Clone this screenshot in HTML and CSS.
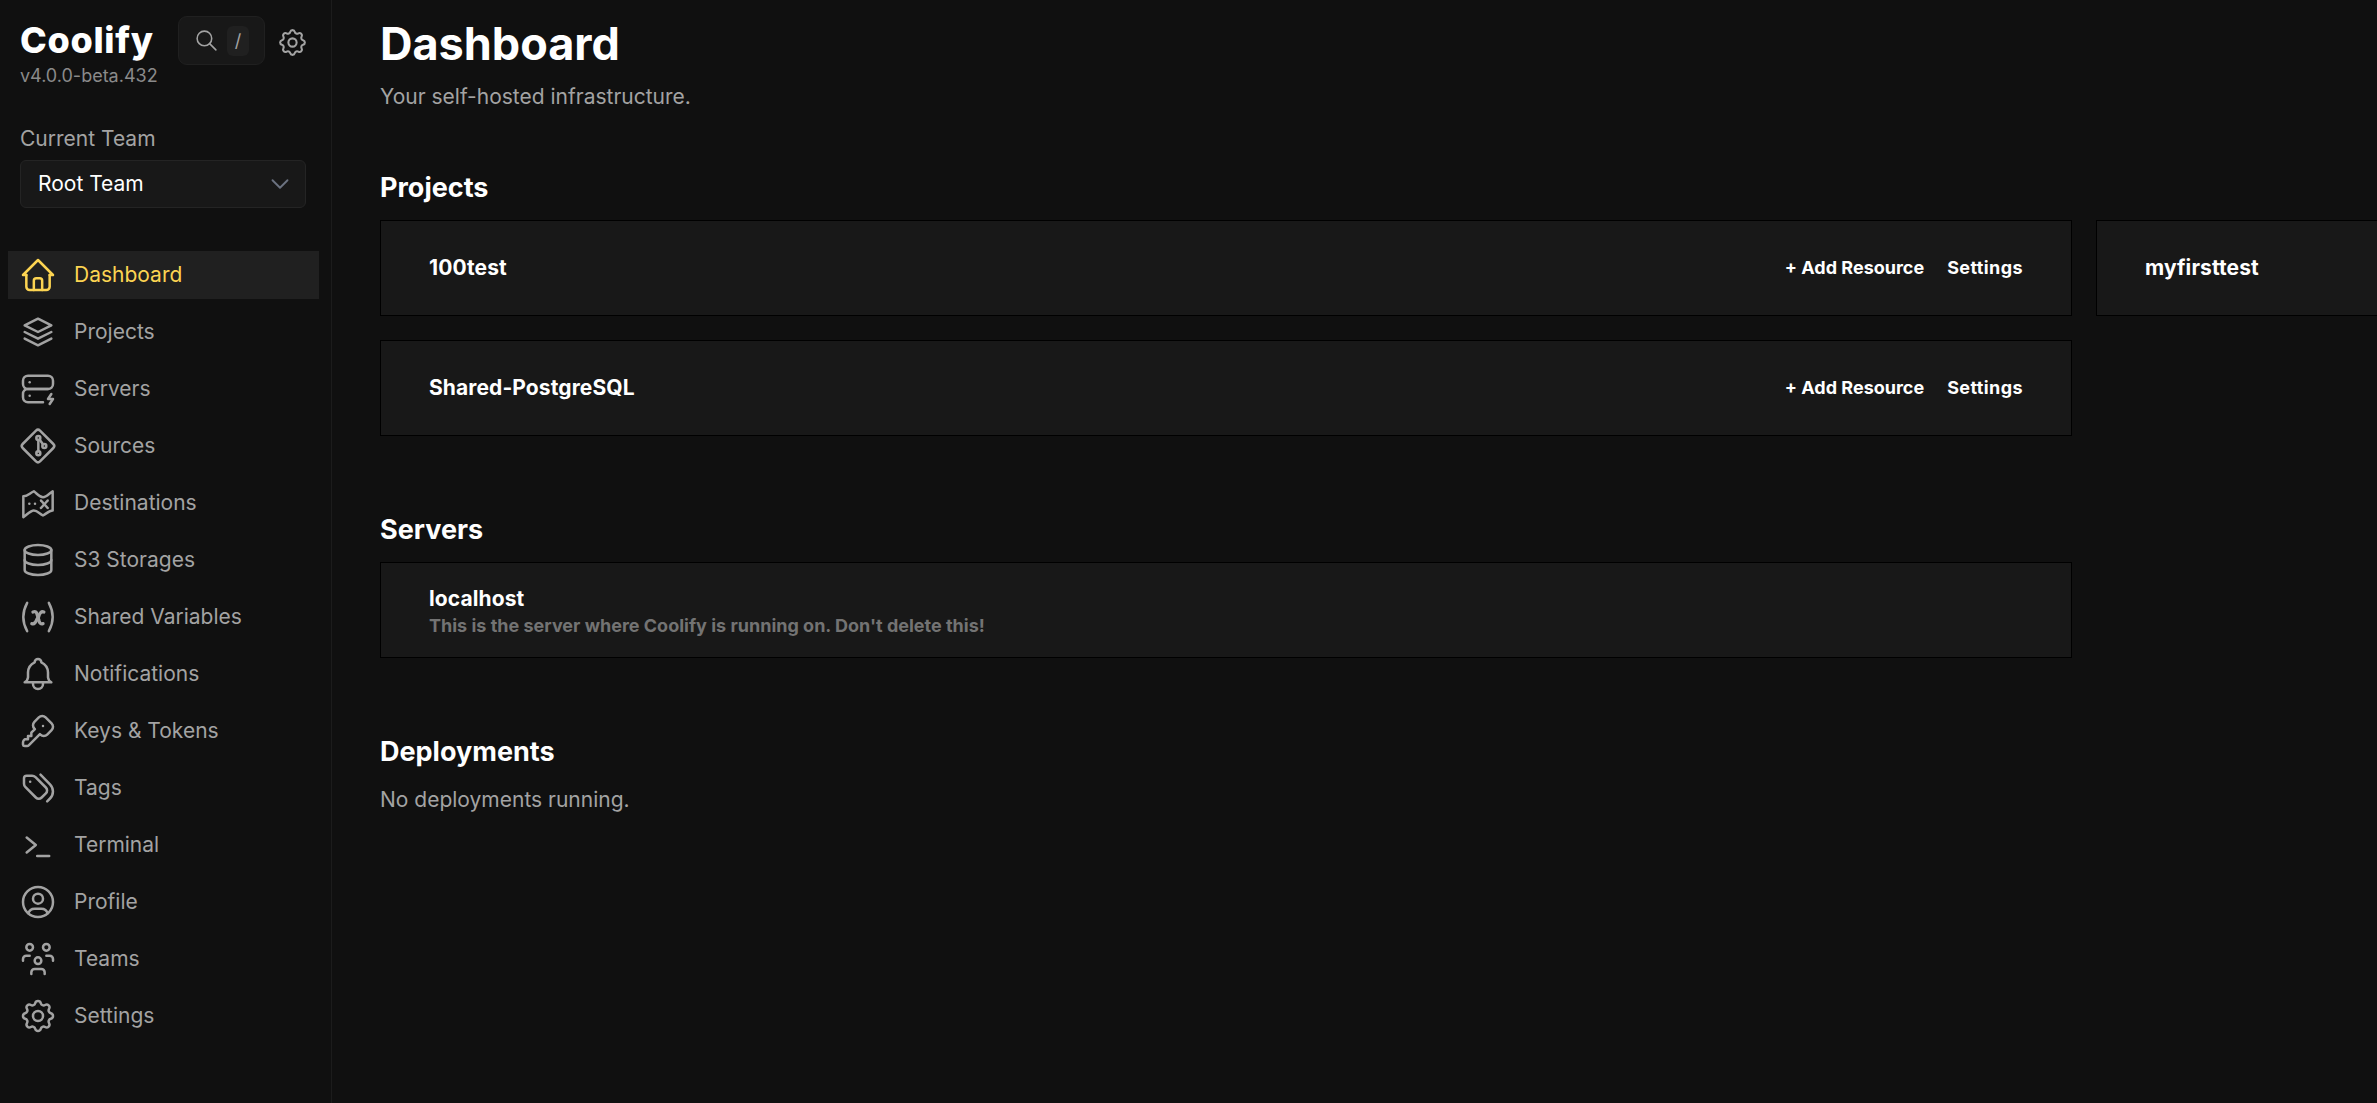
FILE: index.html
```html
<!DOCTYPE html>
<html lang="en">
<head>
	<meta charset="UTF-8">
	<title>Dashboard | Coolify</title>
	<link rel="stylesheet" href="styles.css">
</head>
<body>
	<aside class="sidebar">
		<div class="brand">
			<div class="brand-name">
				<div class="logo">Coolify</div>
				<div class="version">v4.0.0-beta.432</div>
			</div>
			<div class="search">
				<svg class="search-icon" viewBox="0 0 24 24"><path d="M3 10a7 7 0 1 0 14 0a7 7 0 1 0-14 0"/><path d="M21 21l-6-6"/></svg>
				<span class="kbd">/</span>
			</div>
			<svg class="gear" viewBox="0 0 24 24"><path d="M10.325 4.317c.426-1.756 2.924-1.756 3.35 0a1.724 1.724 0 0 0 2.573 1.066c1.543-.94 3.31.826 2.37 2.37a1.724 1.724 0 0 0 1.065 2.572c1.756.426 1.756 2.924 0 3.35a1.724 1.724 0 0 0-1.066 2.573c.94 1.543-.826 3.31-2.37 2.37a1.724 1.724 0 0 0-2.572 1.065c-.426 1.756-2.924 1.756-3.35 0a1.724 1.724 0 0 0-2.573-1.066c-1.543.94-3.31-.826-2.37-2.37a1.724 1.724 0 0 0-1.065-2.572c-1.756-.426-1.756-2.924 0-3.35a1.724 1.724 0 0 0 1.066-2.573c-.94-1.543.826-3.31 2.37-2.37c1 .608 2.296.07 2.572-1.065"/><path d="M9 12a3 3 0 1 0 6 0a3 3 0 0 0-6 0"/></svg>
		</div>

		<div class="team">
			<div class="team-label">Current Team</div>
			<div class="team-select">
				<span>Root Team</span>
				<svg class="chevron" viewBox="0 0 24 24"><path d="M6 9l6 6l6-6"/></svg>
			</div>
		</div>

		<ul class="nav">
			<li class="active">
				<svg viewBox="0 0 24 24"><path d="M5 12H3l9-9l9 9h-2"/><path d="M5 12v7a2 2 0 0 0 2 2h10a2 2 0 0 0 2-2v-7"/><path d="M9.500 21v-5.500a1.500 1.500 0 0 1 1.500-1.500h2a1.500 1.500 0 0 1 1.500 1.500v5.500"/></svg>
				Dashboard
			</li>
			<li>
				<svg viewBox="0 0 24 24"><path d="M12 4L4 8l8 4l8-4z"/><path d="M4 12l8 4l8-4"/><path d="M4 16l8 4l8-4"/></svg>
				Projects
			</li>
			<li>
				<svg viewBox="0 0 24 24"><path d="M3 7a3 3 0 0 1 3-3h12a3 3 0 0 1 3 3v2a3 3 0 0 1-3 3H6a3 3 0 0 1-3-3z"/><path d="M15 20H6a3 3 0 0 1-3-3v-2a3 3 0 0 1 3-3h12"/><path d="M7 8v.01"/><path d="M7 16v.01"/><path d="M20 15l-2 3h3l-2 3"/></svg>
				Servers
			</li>
			<li>
				<svg viewBox="0 0 24 24"><path d="M10.800 2.800l-8 8a1.700 1.700 0 0 0 0 2.400l8 8a1.700 1.700 0 0 0 2.400 0l8-8a1.700 1.700 0 0 0 0-2.400l-8-8a1.700 1.700 0 0 0-2.400 0"/><circle cx="12.200" cy="7.200" r="1.200"/><circle cx="12.200" cy="16.400" r="1.200"/><circle cx="15.800" cy="12" r="1.200"/><path d="M12.200 8.400v6.800"/><path d="M13 8.200l2 2.800"/></svg>
				Sources
			</li>
			<li>
				<svg viewBox="0 0 24 24"><path d="M3.200 8C6 8 7 6 9.500 5C11.500 6.500 13 8.500 15 8.500C17 8.500 19 6 20.800 5V16.500C18.500 16.500 17 18.500 15 19.500C13 18.500 11.500 16.500 9.500 16.500C7.500 16.500 5.500 19 3.200 20.500Z"/><path d="M6.800 12.400v.01"/><path d="M10.200 12.400v.01"/><path d="M13.800 10.500l4 4.500"/><path d="M17.800 10.500l-4 4.500"/></svg>
				Destinations
			</li>
			<li>
				<svg viewBox="0 0 24 24"><path d="M4 6c0 1.657 3.582 3 8 3s8-1.343 8-3s-3.582-3-8-3s-8 1.343-8 3"/><path d="M4 6v6c0 1.657 3.582 3 8 3s8-1.343 8-3V6"/><path d="M4 12v6c0 1.657 3.582 3 8 3s8-1.343 8-3v-6"/></svg>
				S3 Storages
			</li>
			<li>
				<svg viewBox="0 0 24 24"><path d="M5.500 3.500C2.500 9 2.500 15 5.500 20.500"/><path d="M18.500 3.500c3 5.500 3 11.500 0 17"/><path d="M9 9c1.500-.500 2-.200 2.500 1.500l1.200 4c.5 1.500 1 1.800 2.300 1.500" stroke-width="2"/><path d="M15.500 9c-1.500-.500-2.500.500-3.200 3l-1 1.500c-.7 2-1.500 3-3 2.500" stroke-width="2"/></svg>
				Shared Variables
			</li>
			<li>
				<svg viewBox="0 0 24 24"><path d="M10 5a2 2 0 1 1 4 0a7 7 0 0 1 4 6v3a4 4 0 0 0 2 3H4a4 4 0 0 0 2-3v-3a7 7 0 0 1 4-6"/><path d="M9 17v1a3 3 0 0 0 6 0v-1"/></svg>
				Notifications
			</li>
			<li>
				<svg viewBox="0 0 24 24"><path d="M16.555 3.843l3.602 3.602a2.877 2.877 0 0 1 0 4.069l-2.643 2.643a2.877 2.877 0 0 1-4.069 0l-.301-.301l-6.558 6.558a2 2 0 0 1-1.239.578L5.172 21H4a1 1 0 0 1-.993-.883L3 20v-1.172a2 2 0 0 1 .467-1.284l.119-.13L4 17h2v-2h2v-2l2.144-2.144l-.301-.301a2.877 2.877 0 0 1 0-4.069l2.643-2.643a2.877 2.877 0 0 1 4.069 0"/><path d="M15 9h.01"/></svg>
				Keys &amp; Tokens
			</li>
			<li>
				<svg viewBox="0 0 24 24"><path d="M3.600 6.200v3.200c0 .8.300 1.500.900 2.100l6.200 6.200c1 1 2.500 1 3.500 0l2.500-2.500c1-1 1-2.500 0-3.500L10.500 5.500c-.6-.6-1.300-.9-2.100-.9H5.200a1.600 1.600 0 0 0-1.600 1.600"/><path d="M17.500 20l1.700-1.700a6 6 0 0 0 0-8.500L13.500 4"/><path d="M7.300 8.300h.01"/></svg>
				Tags
			</li>
			<li>
				<svg viewBox="0 0 24 24"><path d="M5.200 7.500l5.500 4.500l-5.500 4.500"/><path d="M11.500 18.600h7.200"/></svg>
				Terminal
			</li>
			<li>
				<svg viewBox="0 0 24 24"><path d="M3 12a9 9 0 1 0 18 0a9 9 0 1 0-18 0"/><path d="M9 10a3 3 0 1 0 6 0a3 3 0 1 0-6 0"/><path d="M6.168 18.849A4 4 0 0 1 10 16h4a4 4 0 0 1 3.834 2.855"/></svg>
				Profile
			</li>
			<li>
				<svg viewBox="0 0 24 24"><path d="M10 13a2 2 0 1 0 4 0a2 2 0 0 0-4 0"/><path d="M8 21v-1a2 2 0 0 1 2-2h4a2 2 0 0 1 2 2v1"/><path d="M15 5a2 2 0 1 0 4 0a2 2 0 0 0-4 0"/><path d="M17 10h2a2 2 0 0 1 2 2v1"/><path d="M5 5a2 2 0 1 0 4 0a2 2 0 0 0-4 0"/><path d="M3 13v-1a2 2 0 0 1 2-2h2"/></svg>
				Teams
			</li>
			<li>
				<svg viewBox="0 0 24 24"><path d="M10.325 4.317c.426-1.756 2.924-1.756 3.35 0a1.724 1.724 0 0 0 2.573 1.066c1.543-.94 3.31.826 2.37 2.37a1.724 1.724 0 0 0 1.065 2.572c1.756.426 1.756 2.924 0 3.35a1.724 1.724 0 0 0-1.066 2.573c.94 1.543-.826 3.31-2.37 2.37a1.724 1.724 0 0 0-2.572 1.065c-.426 1.756-2.924 1.756-3.35 0a1.724 1.724 0 0 0-2.573-1.066c-1.543.94-3.31-.826-2.37-2.37a1.724 1.724 0 0 0-1.065-2.572c-1.756-.426-1.756-2.924 0-3.35a1.724 1.724 0 0 0 1.066-2.573c-.94-1.543.826-3.31 2.37-2.37c1 .608 2.296.07 2.572-1.065"/><path d="M9 12a3 3 0 1 0 6 0a3 3 0 0 0-6 0"/></svg>
				Settings
			</li>
		</ul>
	</aside>

	<main class="content">
		<h1>Dashboard</h1>
		<p class="subtitle">Your self-hosted infrastructure.</p>

		<section class="projects">
			<h3>Projects</h3>
			<div class="card-grid">
				<div class="card">
					<div class="card-title">100test</div>
					<div class="card-actions"><span>+ Add Resource</span><span>Settings</span></div>
				</div>
				<div class="card">
					<div class="card-title">myfirsttest</div>
					<div class="card-actions"><span>+ Add Resource</span><span>Settings</span></div>
				</div>
				<div class="card">
					<div class="card-title">Shared-PostgreSQL</div>
					<div class="card-actions"><span>+ Add Resource</span><span>Settings</span></div>
				</div>
			</div>
		</section>

		<section class="servers">
			<h3>Servers</h3>
			<div class="card-grid">
				<div class="card card-server">
					<div class="card-title">localhost</div>
					<div class="card-desc">This is the server where Coolify is running on. Don't delete this!</div>
				</div>
			</div>
		</section>

		<section class="deployments">
			<h3>Deployments</h3>
			<p class="empty">No deployments running.</p>
		</section>
	</main>
</body>
</html>
```

FILE: styles.css
```css
*{
	box-sizing: border-box;
}
html,
body{
	height: 100%;
}
body{
	margin: 0;
	display: flex;
	overflow: hidden;
	background-color: #101010;
	color: #a3a3a3;
	font-family: Inter, "Liberation Sans", sans-serif;
	font-size: 21px;
	line-height: 30px;
}
svg{
	fill: none;
	stroke: currentColor;
	stroke-width: 1.5;
	stroke-linecap: round;
	stroke-linejoin: round;
	flex-shrink: 0;
}

/* sidebar */
.sidebar{
	width: 332px;
	flex-shrink: 0;
	border-right: 1px solid #1c1c1c;
	padding-top: 16px;
}
.brand{
	display: flex;
	padding-left: 20px;
}
.brand-name{
	width: 158px;
}
.logo{
	font-size: 36px;
	line-height: 48px;
	font-weight: 800;
	letter-spacing: .7px;
	color: #fff;
}
.version{
	font-size: 18px;
	line-height: 24px;
	color: #8a8a8a;
}
.search{
	width: 87px;
	height: 49px;
	display: flex;
	align-items: center;
	gap: 8px;
	padding-left: 15px;
	background-color: #181818;
	border: 1px solid #202020;
	border-radius: 9px;
}
.search-icon{
	width: 25px;
	height: 25px;
}
.kbd{
	width: 22px;
	height: 30px;
	background-color: #202020;
	border-radius: 6px;
	text-align: center;
	font-size: 18px;
	line-height: 30px;
}
.gear{
	width: 33px;
	height: 33px;
	margin: 10px 0 0 11px;
}
.team{
	padding: 36px 25px 0 20px;
}
.team-label{
	line-height: 30px;
}
.team-select{
	display: flex;
	align-items: center;
	justify-content: space-between;
	height: 48px;
	margin-top: 6px;
	padding: 0 10px 0 17px;
	background-color: #181818;
	border: 1px solid #242424;
	border-radius: 6px;
	color: #fff;
}
.chevron{
	width: 30px;
	height: 30px;
	color: #6b7280;
}
.nav{
	list-style: none;
	margin: 43px 12px 0 8px;
	padding: 0;
	display: flex;
	flex-direction: column;
	gap: 9px;
}
.nav li{
	display: flex;
	align-items: center;
	gap: 16px;
	height: 48px;
	padding-left: 10px;
}
.nav li svg{
	width: 40px;
	height: 40px;
}
.nav li.active{
	background-color: #202020;
	color: #fcd452;
}

/* main column */
.content{
	flex: 1;
	min-width: 0;
	padding: 17px 0 0 48px;
}
h1{
	margin: 0;
	font-size: 45px;
	line-height: 54px;
	font-weight: 700;
	color: #fff;
}
h3{
	margin: 0;
	font-size: 27px;
	line-height: 36px;
	font-weight: 700;
	color: #fff;
}
.subtitle{
	margin: 11px 0 0;
}
.projects{
	margin-top: 58px;
}
.servers{
	margin-top: 76px;
}
.deployments{
	margin-top: 76px;
}
.card-grid{
	display: grid;
	grid-template-columns: 1692px 1692px;
	gap: 24px;
	margin-top: 14px;
}
.card{
	display: flex;
	align-items: center;
	justify-content: space-between;
	height: 96px;
	padding: 0 48px;
	background-color: #181818;
	border: 1px solid #000;
	color: #fff;
	font-weight: 700;
}
.card-title{
	font-size: 21px;
	letter-spacing: .1px;
}
.card-actions{
	display: flex;
	gap: 23px;
	font-size: 18px;
}
.card-actions span:last-child{
	letter-spacing: .4px;
}
.card-server{
	display: block;
	padding-top: 21px;
}
.card-server .card-title{
	line-height: 30px;
}
.card-desc{
	font-size: 18px;
	line-height: 24px;
	font-weight: 700;
	color: #737373;
}
.empty{
	margin: 15px 0 0;
}
```
